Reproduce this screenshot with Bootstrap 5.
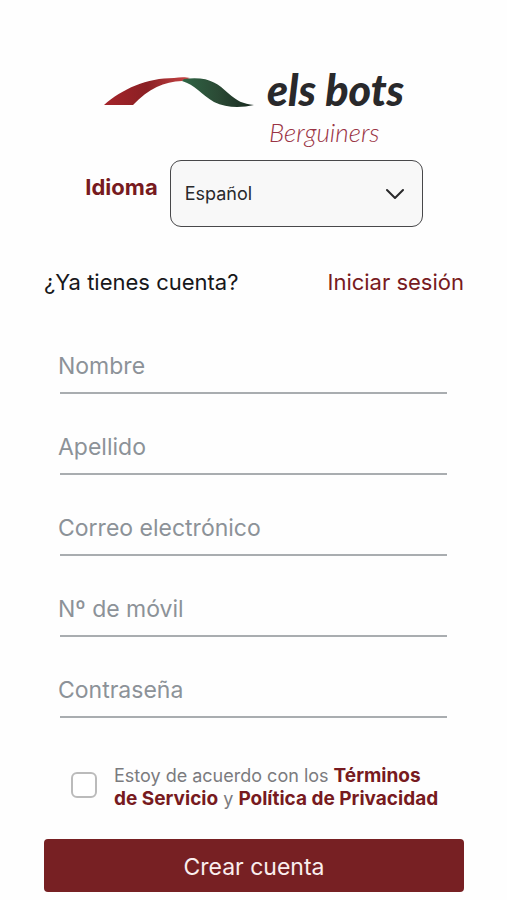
<!DOCTYPE html>
<html lang="es">
<head>
<meta charset="utf-8">
<meta name="viewport" content="width=device-width, initial-scale=1">
<title>Crear cuenta – Els Bots Berguiners</title>
<link rel="stylesheet" href="https://cdn.jsdelivr.net/npm/bootstrap@5.3.0/dist/css/bootstrap.min.css">
<style>
  body { font-family: Inter, "Liberation Sans", sans-serif; background: #fefefe; color: #17171a; }
  .signup { padding: 64px 43px 8px 44px; }
  .brand-red { color: #771a20; }
  .brand { gap: 13px; height: 86px; text-decoration: none; }
  .brand-wave { width: 150px; margin-top: 13px; }
  .brand-name { font-family: Lato, "Open Sans", sans-serif; font-style: italic; white-space: nowrap; }
  .brand-top { font-size: 43px; line-height: 52px; font-weight: 900; color: #29292b; }
  .brand-sub { padding-left: 2px; font-size: 26px; line-height: 32px; font-weight: 300; color: #9a3445; }
  .language { gap: 12px; margin-top: 10px; }
  .language label { font-size: 22px; line-height: 32px; margin-top: 11px; }
  .language-select { width: 253px; }
  .language-select .form-select { height: 67px; padding: 0 48px 0 14px; font-size: 18px; color: #29292b; background: #f8f8f8; border: 1px solid #48484a; border-radius: 11px; }
  .language-select svg { position: absolute; right: 19px; top: 28px; pointer-events: none; }
  .login-row { margin-top: 39px; font-size: 22px; line-height: 32px; }
  .fields { padding: 43px 17px 0 14px; }
  .line-field { height: 53px; padding: 0 0 3px; margin-bottom: 28px; font-size: 23px; border: 0; border-radius: 0; }
  .line-field, .line-field:focus { background: linear-gradient(#a9adb0, #a9adb0) right bottom / calc(100% - 2px) 2px no-repeat; }
  .line-field::placeholder { color: #8c9298; opacity: 1; }
  .terms { padding: 18px 20px 0 27px; gap: 17px; }
  .terms .form-check-input { width: 26px; height: 26px; margin: 8px 0 0; border: 2px solid #bbb; border-radius: 6px; }
  .terms label { font-size: 18px; line-height: 23px; color: #7b7b7e; }
  .terms a { font-size: 19px; line-height: 22px; font-weight: 700; text-decoration: none; }
  .btn-create { margin-top: 29px; height: 53px; padding: 3px 0 0; font-size: 23px; color: #faeeee; background: #772023; border: 0; border-radius: 4px; }
  .btn-create:hover { color: #fff; background: #651a1d; }
</style>
</head>
<body>
<main class="signup">
  <a href="#" class="brand d-flex justify-content-center align-items-start" aria-label="Els Bots Berguiners">
    <svg class="brand-wave flex-shrink-0" viewBox="0 0 150 32" aria-hidden="true">
      <defs>
        <linearGradient id="red" x1="0" x2="1"><stop offset="0" stop-color="#a5242a"/><stop offset=".5" stop-color="#8a2024"/><stop offset="1" stop-color="#c94545"/></linearGradient>
        <linearGradient id="green" x1="0" x2="1"><stop offset="0" stop-color="#2f6545"/><stop offset=".5" stop-color="#2b4a35"/><stop offset="1" stop-color="#17281f"/></linearGradient>
      </defs>
      <path fill="url(#red)" d="M0 28 C18 12 43 1 70 1 C76 0 82 0 86 1 L78 4 C60 5 45 11 29 28 Z"/>
      <path fill="url(#green)" d="M80 2 C104 -1 113 6 124 16 C133 24 139 27 150 28 C137 31 122 31 110 25 C97 17 91 8 78 4 Z"/>
    </svg>
    <span class="brand-name d-flex flex-column">
      <span class="brand-top">els bots</span>
      <span class="brand-sub">Berguiners</span>
    </span>
  </a>

  <div class="language d-flex justify-content-center align-items-start">
    <label for="lang" class="brand-red fw-bold">Idioma</label>
    <div class="language-select position-relative">
      <select id="lang" class="form-select">
        <option>Español</option>
        <option>Català</option>
        <option>English</option>
      </select>
      <svg width="18" height="12" viewBox="0 0 18 12" fill="none" stroke="#29292b" stroke-width="2" stroke-linecap="round" stroke-linejoin="round" aria-hidden="true"><path d="M1 2l8 8 8-8"/></svg>
    </div>
  </div>

  <div class="login-row d-flex justify-content-between">
    <span>¿Ya tienes cuenta?</span>
    <a href="#" class="brand-red text-decoration-none">Iniciar sesión</a>
  </div>

  <form>
    <div class="fields">
      <input class="form-control line-field" type="text" placeholder="Nombre" aria-label="Nombre">
      <input class="form-control line-field" type="text" placeholder="Apellido" aria-label="Apellido">
      <input class="form-control line-field" type="email" placeholder="Correo electrónico" aria-label="Correo electrónico">
      <input class="form-control line-field" type="tel" placeholder="Nº de móvil" aria-label="Nº de móvil">
      <input class="form-control line-field" type="password" placeholder="Contraseña" aria-label="Contraseña">
    </div>
    <div class="terms d-flex align-items-start">
      <input class="form-check-input flex-shrink-0" type="checkbox" id="terms">
      <label for="terms">Estoy de acuerdo con los <a href="#" class="brand-red">Términos de Servicio</a> y <a href="#" class="brand-red">Política de Privacidad</a></label>
    </div>
    <button type="submit" class="btn btn-create w-100">Crear cuenta</button>
  </form>
</main>
<script src="https://cdn.jsdelivr.net/npm/bootstrap@5.3.0/dist/js/bootstrap.bundle.min.js"></script>
</body>
</html>
